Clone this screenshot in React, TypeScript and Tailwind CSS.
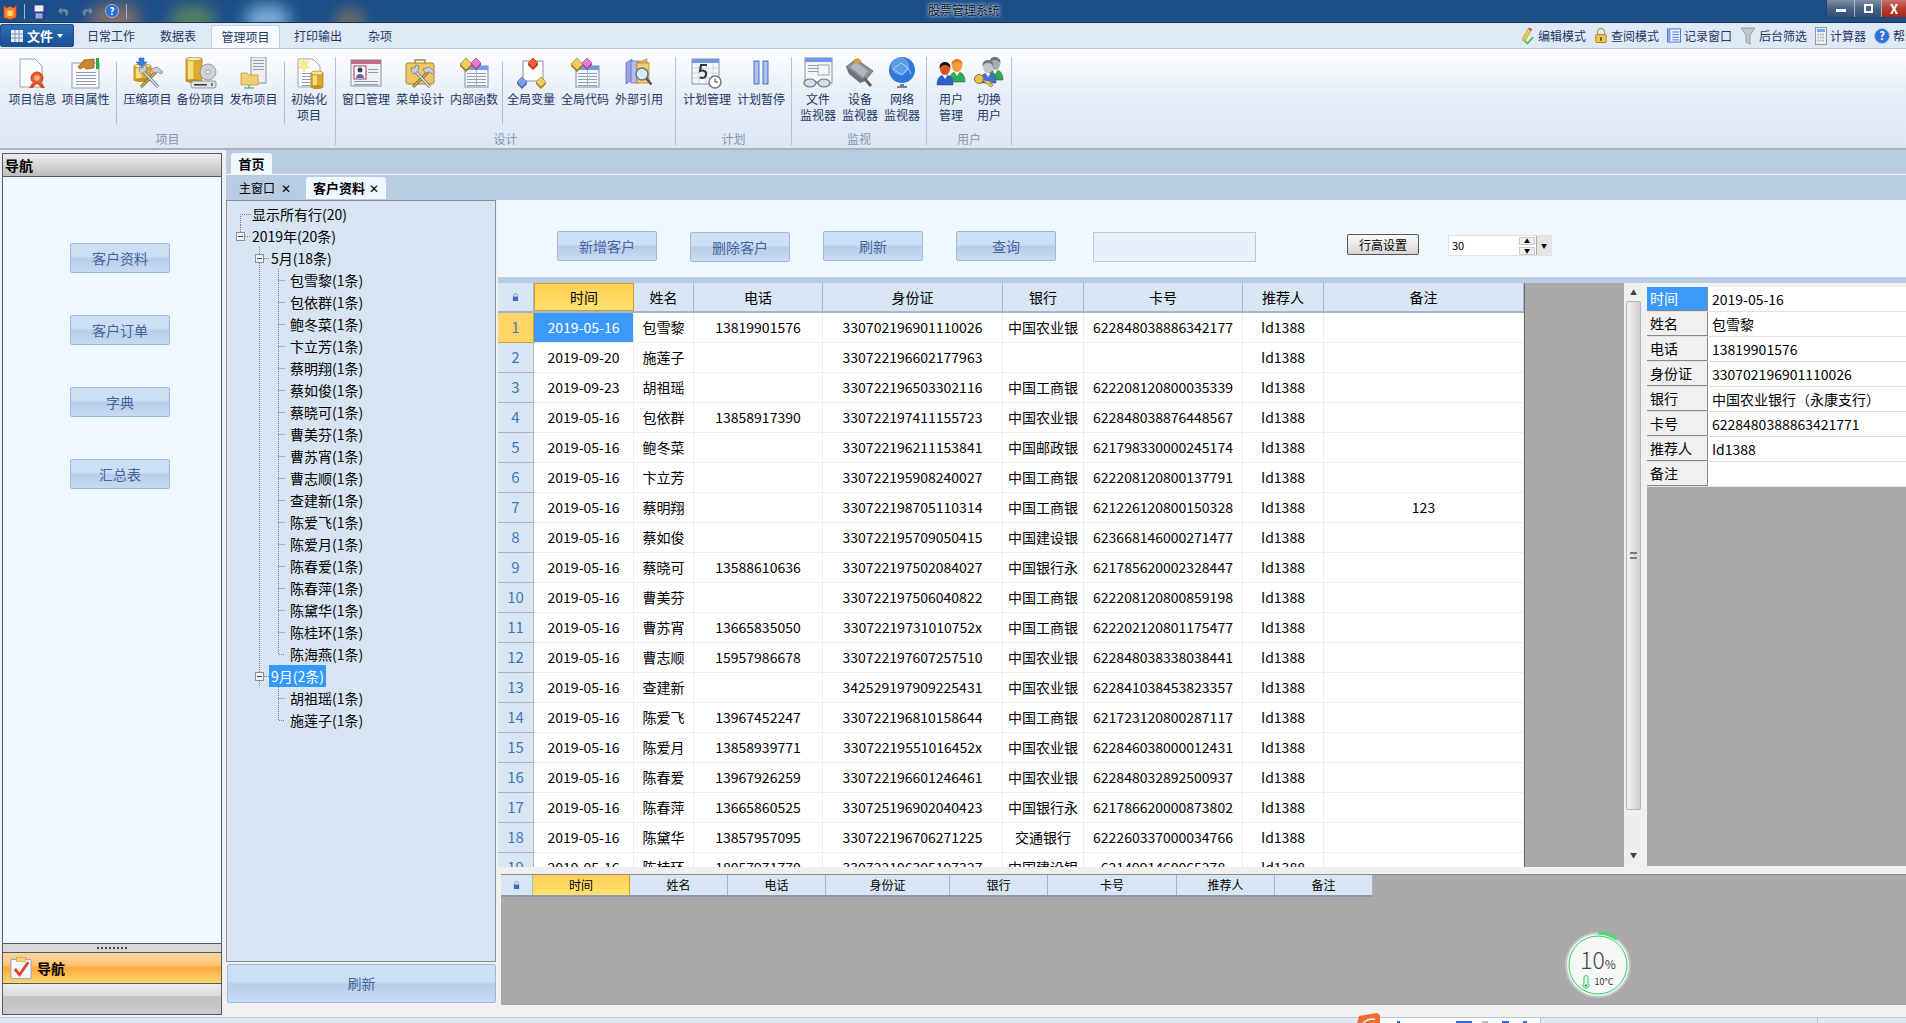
import React from 'react';

const FONT = "font-['Noto_Sans_CJK_SC','Noto_Sans',sans-serif]";
const BLUE_BTN =
  'flex items-center justify-center border border-[#9fb8da] rounded-[2px] text-[14px] text-[#44659f] bg-[linear-gradient(#cee0f6_0%,#cbdef5_45%,#b9cde8_52%,#c8dbf3_100%)]';
const HEAD = 'flex items-center justify-center border-r border-[#a5b5d0] text-[14px] text-black bg-[#d8e6f4]';
const HEAD_ACTIVE =
  'flex items-center justify-center border border-[#d99a2b] text-[14px] text-black bg-[linear-gradient(#ffd052,#ffe270)]';

// ---- ribbon icons, all on a 32x32 box
const Doc = ({ x = 5, w = 20 }: { x?: number; w?: number }) => (
  <path d={`M${x} 2h${w - 7}l7 7v21h-${w}z`} fill="#fbfcfe" stroke="#9aa6b8" strokeWidth="1" />
);
const Lines = ({ x, y, w, n }: { x: number; y: number; w: number; n: number }) => (
  <g stroke="#8e9bb0" strokeWidth="1">
    {Array.from({ length: n }).map((_, i) => (
      <line key={i} x1={x} x2={x + w} y1={y + i * 3 + 0.5} y2={y + i * 3 + 0.5} />
    ))}
  </g>
);
const Cyl = ({ x, y, w, h }: { x: number; y: number; w: number; h: number }) => (
  <g>
    <rect x={x} y={y + 2} width={w} height={h - 3} fill="#dfa92e" stroke="#a97c14" strokeWidth=".7" />
    <rect x={x + 2} y={y + 3} width={w / 3} height={h - 5} fill="#f7dd83" />
    <ellipse cx={x + w / 2} cy={y + 2} rx={w / 2} ry="2" fill="#f6e6a4" stroke="#a97c14" strokeWidth=".7" />
    <ellipse cx={x + w / 2} cy={y + h - 1} rx={w / 2} ry="2" fill="#c48f1c" />
  </g>
);
const Tools = ({ dx = 0, dy = 0 }: { dx?: number; dy?: number }) => (
  <g transform={`translate(${dx} ${dy})`}>
    <path d="M8 28l15-15" stroke="#6a5a2c" strokeWidth="3" />
    <path d="M8 28l15-15" stroke="#d9b65a" strokeWidth="1.4" />
    <path d="M25 28L11 13" stroke="#70777f" strokeWidth="3.2" />
    <path d="M25 28L11 13" stroke="#dfe4ea" strokeWidth="1.4" />
    <path d="M7 8a5 5 0 0 0 2 7l4-3 1-5-3-1-1 3-2 0z" fill="#c8ced6" stroke="#6f7780" strokeWidth=".7" />
    <path d="M18 10l6-2 6 5-2 2-4-2-4 1z" fill="#c8ced6" stroke="#6f7780" strokeWidth=".7" />
  </g>
);
const TableIc = ({ x = 7, y = 9 }: { x?: number; y?: number }) => (
  <g>
    <rect x={x} y={y} width="23" height="21" fill="#f5f7fb" stroke="#7f8ea6" />
    <rect x={x} y={y} width="23" height="4" fill="#6f9be6" />
    <Lines x={x + 2} y={y + 7} w={19} n={5} />
    <path d={`M${x + 11.5} ${y + 4}v17`} stroke="#a8b3c4" />
  </g>
);
const Diamond = ({ cx, cy, c, d, r = 5 }: { cx: number; cy: number; c: string; d: string; r?: number }) => (
  <g>
    <path d={`M${cx} ${cy - r}L${cx + r} ${cy}L${cx} ${cy + r}L${cx - r} ${cy}z`} fill={c} stroke={d} strokeWidth=".7" />
    <path d={`M${cx - r} ${cy}L${cx} ${cy + r}L${cx + r} ${cy}L${cx + r} ${cy + 2}L${cx} ${cy + r + 2}L${cx - r} ${cy + 2}z`} fill={d} />
  </g>
);
const Person = ({ x, y, skin, hair, body, s = 1 }: { x: number; y: number; skin: string; hair: string; body: string; s?: number }) => (
  <g transform={`translate(${x} ${y}) scale(${s})`}>
    <path d="M-8 22c0-7 3-10 8-10s8 3 8 10z" fill={body} stroke="#2a3f5f" strokeWidth=".5" />
    <path d="M-2.5 12L0 16l2.5-4z" fill="#fff" />
    <ellipse cx="0" cy="6" rx="5" ry="6" fill={skin} />
    <path d="M-5.4 6c-.6-5 2-7 5.4-7s6 2 5.4 7c-1-3-3-4-5.400-4s-4.400 1-5.400 4z" fill={hair} />
  </g>
);

const ICONS: Record<string, React.ReactNode> = {
  info: (
    <>
      <Doc x={3} w={22} />
      <circle cx="20" cy="21" r="6" fill="#ee5a2a" stroke="#c43c14" />
      <circle cx="20" cy="21" r="2.800" fill="#fbb27c" />
      <path d="M15 26l-3 5h4l3-4zM25 26l3 5h-4l-3-4z" fill="#dd4a1e" />
    </>
  ),
  prop: (
    <>
      <rect x="2" y="6" width="27" height="25" fill="#f8fafd" stroke="#8f9bb0" />
      <Lines x={6} y={15} w={20} n={5} />
      <path d="M8 10l6-7 10-1 0 9-8 1-2-2-4 2z" fill="#c98a2d" stroke="#7c5311" strokeWidth=".7" />
      <rect x="26" y="1" width="3" height="11" fill="#28a745" />
    </>
  ),
  zip: (
    <>
      <Cyl x={2} y={7} w={17} h={17} />
      <path d="M7 1h5v4h3l-5.500 5L4 5h3z" fill="#3b7fe0" stroke="#1f55a8" strokeWidth=".5" />
      <Tools dx={1} dy={2} />
    </>
  ),
  backup: (
    <>
      <Cyl x={1} y={0} w={16} h={25} />
      <rect x="6" y="24" width="25" height="7" rx="2" fill="#dfe3e8" stroke="#6c7480" strokeWidth=".7" />
      <rect x="9" y="27" width="13" height="1.500" fill="#333" />
      <rect x="26" y="26" width="2" height="3" fill="#2aa84a" />
      <circle cx="23" cy="15" r="8" fill="#cfd3d8" stroke="#7c838c" strokeWidth=".7" />
      <circle cx="23" cy="15" r="2" fill="#fff" stroke="#7c838c" strokeWidth=".7" />
    </>
  ),
  publish: (
    <>
      <rect x="13" y="0" width="15" height="26" fill="#eceeef" stroke="#8c9096" />
      <Lines x={15} y={3} w={11} n={4} />
      <path d="M3 16h6l2 2h9v10H3z" fill="#f2cf73" stroke="#b68f2d" strokeWidth=".7" />
      <path d="M11 28v3M6 31h10" stroke="#2fae3e" />
    </>
  ),
  init: (
    <>
      <Doc x={5} w={22} />
      <Lines x={9} y={16} w={11} n={5} />
      <path d="M10 1l1.500 4 4-1-2 4 3 3-4 0-1.500 4-1.500-4-4 0 3-3-2-4 4 1z" fill="#fdf08a" stroke="#e7c733" strokeWidth=".4" />
      <Cyl x={18} y={14} w={12} h={17} />
    </>
  ),
  window: (
    <>
      <rect x="1" y="3" width="30" height="26" fill="#eef0f4" stroke="#8a8f9a" />
      <rect x="1" y="3" width="30" height="4" fill="#c06a86" />
      <rect x="4" y="9" width="12" height="13" fill="#fff" stroke="#a8365f" />
      <circle cx="10" cy="13" r="2.500" fill="#33415f" />
      <path d="M6 21c0-3 2-4 4-4s4 1 4 4z" fill="#4d6da8" />
      <Lines x={18} y={12} w={10} n={2} />
      <Lines x={4} y={24} w={24} n={2} />
    </>
  ),
  menu: (
    <>
      <rect x="2" y="6" width="28" height="21" rx="2" fill="#f0c363" stroke="#a98534" />
      <path d="M11 6V3h10v3" fill="none" stroke="#a98534" strokeWidth="1.500" />
      <Tools dx={1} dy={2} />
    </>
  ),
  func: (
    <>
      <TableIc />
      <Diamond cx={8} cy={7} c="#f0cb63" d="#a07e26" r={6} />
      <Diamond cx={18} cy={6} c="#e57fd0" d="#a74a96" r={5} />
    </>
  ),
  var: (
    <>
      <rect x="8" y="4" width="20" height="20" fill="#fbfbfb" stroke="#8a8f98" />
      <Diamond cx={18} cy={6} c="#f0603a" d="#b83a1c" r={5} />
      <Diamond cx={7} cy={25} c="#7f9de6" d="#4a66b8" r={5} />
      <Diamond cx={26} cy={25} c="#f2cb5f" d="#a9842a" r={5} />
    </>
  ),
  ref: (
    <>
      <path d="M3 6l6-4v21l-6 4z" fill="#9aa3e6" stroke="#5a63a8" strokeWidth=".7" />
      <rect x="8" y="4" width="8" height="22" fill="#b4bbf0" stroke="#5a63a8" strokeWidth=".7" />
      <path d="M14 6l10-4v20l-10 4z" fill="#e9bf4a" stroke="#a07e26" strokeWidth=".7" />
      <rect x="14" y="6" width="12" height="20" fill="#f3d26f" stroke="#a07e26" strokeWidth=".7" />
      <circle cx="19" cy="17" r="6" fill="#dceaf6" stroke="#6b7280" strokeWidth="1.500" />
      <path d="M23.500 21.500l5 6" stroke="#52565c" strokeWidth="2.500" />
    </>
  ),
  plan: (
    <>
      <rect x="1" y="2" width="27" height="25" fill="#f4f6fa" stroke="#8a93a3" />
      <rect x="1" y="2" width="27" height="4" fill="#6f9be6" />
      <path d="M1 11h27M1 16h27M1 21h27M8 6v21M15 6v21M22 6v21" stroke="#c2c9d4" strokeWidth=".7" />
      <path d="M16 8h-6l-1 6c3-1 7 0 6 4s-5 3-6 2" fill="none" stroke="#333" strokeWidth="2" />
      <circle cx="24" cy="25" r="6" fill="#fff" stroke="#6f7680" strokeWidth="1.400" />
      <path d="M24 21.500V25h3" fill="none" stroke="#333" />
    </>
  ),
  pause: (
    <g stroke="#2f55b8" strokeWidth=".8">
      <rect x="9" y="4" width="5" height="23" fill="#a9c2f2" />
      <rect x="18" y="4" width="5" height="23" fill="#a9c2f2" />
    </g>
  ),
  filemon: (
    <>
      <rect x="3" y="1" width="27" height="25" fill="#f3f5f9" stroke="#8a93a3" />
      <rect x="3" y="1" width="27" height="4" fill="#6f9be6" />
      <Lines x={6} y={8} w={10} n={3} />
      <rect x="16" y="8" width="11" height="10" fill="none" stroke="#9aa3b2" />
      <ellipse cx="8" cy="26" rx="6" ry="4" fill="#d5dfe9" stroke="#6f7680" strokeWidth="1.200" />
      <ellipse cx="22" cy="26" rx="6" ry="4" fill="#d5dfe9" stroke="#6f7680" strokeWidth="1.200" />
      <path d="M14 25h2" stroke="#6f7680" />
    </>
  ),
  device: (
    <>
      <path d="M2 10L12 2l17 12-8 10z" fill="#8d9198" stroke="#4e5258" strokeWidth=".7" />
      <path d="M6 10l6-5 12 9-5 6z" fill="#b3b6bb" />
      <path d="M9 3l5-2 4 3-5 3z" fill="#e39a3c" />
      <path d="M20 21l7 8" stroke="#5d6167" strokeWidth="3" />
      <path d="M2 10l3 7 11 9 5-2" fill="#6e7278" />
    </>
  ),
  globe: (
    <>
      <circle cx="16" cy="13" r="13" fill="#2f78d8" />
      <circle cx="14" cy="9" r="9" fill="#7db4f0" opacity=".6" />
      <path d="M7 12l8-6 7 5-6 7zM22 11l3 6" fill="none" stroke="#d5e8ff" strokeWidth=".7" />
      <path d="M14 27h4v2h3v2H11v-2h3z" fill="#7b8089" />
    </>
  ),
  users: (
    <>
      <Person x={22} y={3} skin="#f39b3a" hair="#e17f1d" body="#2fae55" />
      <Person x={10} y={6} skin="#d9541d" hair="#141414" body="#2f62d0" />
    </>
  ),
  switch: (
    <>
      <Person x={22} y={1} skin="#a8adb2" hair="#6d7278" body="#3aa457" />
      <Person x={15} y={4} skin="#c3c7cc" hair="#72777d" body="#4b6ed2" />
      <circle cx="6" cy="22" r="4.500" fill="#e9c44f" stroke="#8c7420" />
      <path d="M9 23l9 7 2-2-3-2 2-1" fill="#e9c44f" stroke="#8c7420" strokeWidth=".7" />
    </>
  ),
};

const RibbonIcon = ({ name, className = 'w-[32px] h-[32px]' }: { name: string; className?: string }) => (
  <svg viewBox="0 0 32 32" className={className}>
    {ICONS[name]}
  </svg>
);

const RibbonItem = ({ icon, lines, w }: { icon: string; lines: string[]; w: string }) => (
  <div className={`flex flex-col items-center shrink-0 ${w}`}>
    <RibbonIcon name={icon} />
    <div className="mt-[2px] text-center text-[12px] leading-[16px] text-[#1f3864] whitespace-nowrap">
      {lines.map((l) => (
        <div key={l}>{l}</div>
      ))}
    </div>
  </div>
);

const InnerSep = ({ className }: { className: string }) => (
  <div className={`w-px h-[62px] mt-[5px] shrink-0 bg-[#aebccd] ${className}`} />
);
const GroupSep = () => <div className="w-px h-[88px] mt-[8px] shrink-0 bg-[#b4c2d3]" />;

const Group = ({ label, w, pl, children }: { label: string; w: string; pl: string; children: React.ReactNode }) => (
  <div className={`flex flex-col shrink-0 ${w}`}>
    <div className={`flex h-[83px] pt-[8px] ${pl}`}>{children}</div>
    <div className="text-center text-[12px] leading-[14px] text-[#8595aa]">{label}</div>
  </div>
);

const QuickIcon = ({ name }: { name: string }) => {
  if (name === 'edit')
    return (
      <svg viewBox="0 0 16 18" className="w-[15px] h-[18px]">
        <path d="M9 1l3 2-6 10-3 1 0-3z" fill="#f2c94c" stroke="#a8842a" strokeWidth=".6" />
        <path d="M10 0l3 2-1 1.500-3-2z" fill="#d33" />
        <path d="M5 14l3 3 6-7" fill="none" stroke="#5cb83c" strokeWidth="1.800" />
      </svg>
    );
  if (name === 'lock')
    return (
      <svg viewBox="0 0 16 18" className="w-[14px] h-[17px]">
        <path d="M4 8V5a4 4 0 0 1 8 0v3" fill="none" stroke="#b9a27a" strokeWidth="1.500" />
        <rect x="2" y="8" width="12" height="9" rx="1" fill="#f3c44e" stroke="#a27a1f" />
        <rect x="7" y="11" width="2" height="4" fill="#5c4511" />
      </svg>
    );
  if (name === 'rec')
    return (
      <svg viewBox="0 0 16 16" className="w-[14px] h-[15px]">
        <rect x=".5" y=".5" width="15" height="15" fill="#eef3fc" stroke="#3f6cc7" />
        <rect x="1" y="1" width="3" height="14" fill="#7ea4ea" />
        <path d="M6 4h8M6 7h8M6 10h8M6 13h8" stroke="#3f6cc7" />
      </svg>
    );
  if (name === 'filter')
    return (
      <svg viewBox="0 0 16 18" className="w-[16px] h-[18px]">
        <path d="M1 1h14l-5 7v9l-4-2V8z" fill="#c4c6c9" stroke="#7e8186" strokeWidth=".7" />
      </svg>
    );
  if (name === 'calc')
    return (
      <svg viewBox="0 0 12 18" className="w-[12px] h-[18px]">
        <rect x=".5" y=".5" width="11" height="17" fill="#eceef1" stroke="#9399a3" />
        <rect x="2" y="2" width="8" height="3" fill="#7ea4ea" />
        <path d="M2.500 7.500h7M2.500 10.500h7M2.500 13.500h7" stroke="#a8adb6" strokeDasharray="1.500 1" strokeWidth="1.500" />
      </svg>
    );
  return <Help className="w-[16px] h-[16px]" />;
};

const Help = ({ className }: { className: string }) => (
  <svg viewBox="0 0 16 16" className={className}>
    <circle cx="8" cy="8" r="7.500" fill="#2f6fd8" stroke="#a9c4ee" />
    <text x="8" y="12" textAnchor="middle" fontSize="11" fontWeight="700" fill="#fff">
      ?
    </text>
  </svg>
);

const QUICK = [
  ['edit', '编辑模式'],
  ['lock', '查阅模式'],
  ['rec', '记录窗口'],
  ['filter', '后台筛选'],
  ['calc', '计算器'],
  ['help', '帮助'],
];

const Lock = () => (
  <svg viewBox="0 0 8 10" className="w-[7px] h-[9px]">
    <path d="M2 4V2.500a2 2 0 0 1 4 0V4" fill="none" stroke="#7d93bd" />
    <rect x="1" y="4" width="6" height="5" fill="#3f66c4" />
  </svg>
);

const NavBtn = ({ children }: { children: string }) => <div className={`w-[100px] h-[30px] ${BLUE_BTN}`}>{children}</div>;

// tree connector drawn in a 19x22 cell
const Conn = ({ kind }: { kind: string }) => {
  const d = 'stroke-[#808080]';
  return (
    <svg width="19" height="22" className="shrink-0">
      <g className={d} strokeDasharray="1 1" fill="none">
        {kind === 'first' && <path d="M7.500 22V11.500H18" />}
        {kind === 'v' && <path d="M7.500 0V22" />}
        {kind === 'tee' && <path d="M7.500 0V22M7.500 11.500H14" />}
        {kind === 'end' && <path d="M7.500 0V11.500H14" />}
        {kind === 'box' && <path d="M7.500 0V7M12 11.500H18" />}
        {kind === 'boxd' && <path d="M7.500 0V7M12 11.500H18M7.500 16V22" />}
      </g>
      {(kind === 'box' || kind === 'boxd') && (
        <g>
          <rect x="3.500" y="7.500" width="8" height="8" fill="#eef2f7" stroke="#8a8f98" />
          <path d="M5 11.500h5" stroke="#444" />
        </g>
      )}
    </svg>
  );
};

const MAY = ['包雪黎', '包依群', '鲍冬菜', '卞立芳', '蔡明翔', '蔡如俊', '蔡晓可', '曹美芬', '曹苏宵', '曹志顺', '查建新', '陈爱飞', '陈爱月', '陈春爱', '陈春萍', '陈黛华', '陈桂环', '陈海燕'];
const SEP = ['胡祖瑶', '施莲子'];

const TreeRow = ({ cols, text, active }: { cols: string[]; text: string; active?: boolean }) => (
  <div className="flex items-center h-[22px] text-[14px] text-black whitespace-nowrap">
    {cols.map((k, i) => (
      <Conn key={i} kind={k} />
    ))}
    <span className={active ? 'px-[2px] -ml-[2px] leading-[22px] bg-[#3399ff] text-white' : ''}>{text}</span>
  </div>
);

const COLS = 'grid-cols-[36px_100px_60px_129px_180px_81px_159px_81px_200px]';
const ROWS: string[][] = [
  ['2019-05-16', '包雪黎', '13819901576', '330702196901110026', '中国农业银', '622848038886342177', ''],
  ['2019-09-20', '施莲子', '', '330722196602177963', '', '', ''],
  ['2019-09-23', '胡祖瑶', '', '330722196503302116', '中国工商银', '622208120800035339', ''],
  ['2019-05-16', '包依群', '13858917390', '330722197411155723', '中国农业银', '622848038876448567', ''],
  ['2019-05-16', '鲍冬菜', '', '330722196211153841', '中国邮政银', '621798330000245174', ''],
  ['2019-05-16', '卞立芳', '', '330722195908240027', '中国工商银', '622208120800137791', ''],
  ['2019-05-16', '蔡明翔', '', '330722198705110314', '中国工商银', '621226120800150328', '123'],
  ['2019-05-16', '蔡如俊', '', '330722195709050415', '中国建设银', '623668146000271477', ''],
  ['2019-05-16', '蔡晓可', '13588610636', '330722197502084027', '中国银行永', '621785620002328447', ''],
  ['2019-05-16', '曹美芬', '', '330722197506040822', '中国工商银', '622208120800859198', ''],
  ['2019-05-16', '曹苏宵', '13665835050', '33072219731010752x', '中国工商银', '622202120801175477', ''],
  ['2019-05-16', '曹志顺', '15957986678', '330722197607257510', '中国农业银', '622848038338038441', ''],
  ['2019-05-16', '查建新', '', '342529197909225431', '中国农业银', '622841038453823357', ''],
  ['2019-05-16', '陈爱飞', '13967452247', '330722196810158644', '中国工商银', '621723120800287117', ''],
  ['2019-05-16', '陈爱月', '13858939771', '33072219551016452x', '中国农业银', '622846038000012431', ''],
  ['2019-05-16', '陈春爱', '13967926259', '330722196601246461', '中国农业银', '622848032892500937', ''],
  ['2019-05-16', '陈春萍', '13665860525', '330725196902040423', '中国银行永', '621786620000873802', ''],
  ['2019-05-16', '陈黛华', '13857957095', '330722196706271225', '交通银行', '622260337000034766', ''],
  ['2019-05-16', '陈桂环', '18057971770', '330722196305197327', '中国建设银', '6214991460065278', ''],
];

const Cell = ({ children, className = '' }: { children?: React.ReactNode; className?: string }) => (
  <div className={`flex items-center justify-center h-[30px] border-r border-b border-[#ededed] text-[14px] text-black whitespace-nowrap overflow-hidden ${className}`}>
    {children}
  </div>
);

const PROPS: [string, string][] = [
  ['时间', '2019-05-16'],
  ['姓名', '包雪黎'],
  ['电话', '13819901576'],
  ['身份证', '330702196901110026'],
  ['银行', '中国农业银行（永康支行）'],
  ['卡号', '6228480388863421771'],
  ['推荐人', 'Id1388'],
  ['备注', ''],
];

const LOWER = ['姓名', '电话', '身份证', '银行', '卡号', '推荐人', '备注'];

export default function App() {
  return (
    <div className={`relative w-[1906px] h-[1023px] overflow-hidden flex flex-col bg-[#f0f0f0] ${FONT}`}>
      {/* title bar */}
      <div className="relative h-[23px] shrink-0 flex items-center overflow-hidden border-b border-[#16304f] bg-[#1c4e88]">
        <div className="absolute left-[90px] top-[4px] w-[50px] h-[30px] rounded-full bg-[#b07a5a] opacity-70 blur-[8px]" />
        <div className="absolute left-[170px] top-[6px] w-[45px] h-[30px] rounded-full bg-[#6f9a52] opacity-70 blur-[8px]" />
        <div className="absolute left-[245px] top-[5px] w-[45px] h-[30px] rounded-full bg-[#8fc4e6] opacity-80 blur-[8px]" />
        <div className="absolute left-[335px] top-[8px] w-[30px] h-[25px] rounded-full bg-[#8a7a5c] opacity-70 blur-[7px]" />
        <div className="relative flex items-center gap-[7px] pl-[3px]">
          <svg viewBox="0 0 16 18" className="w-[14px] h-[17px]">
            <path d="M1 2l3 3 4-2 4 2 3-3v14l-7 2-7-2z" fill="#f0862d" stroke="#c8351a" />
            <path d="M5 8h6v6H5z" fill="#f7dc6f" />
          </svg>
          <div className="w-px h-[15px] bg-[#9fb4cc]" />
          <svg viewBox="0 0 16 16" className="w-[14px] h-[15px]">
            <rect width="16" height="16" rx="1" fill="#2d3f8f" />
            <rect x="3" y="1" width="10" height="7" fill="#e8ecf6" />
            <rect x="4" y="10" width="8" height="6" fill="#9aa6cf" />
          </svg>
          <svg viewBox="0 0 14 14" className="w-[13px] h-[14px] ml-[4px]">
            <path d="M11 12c3-5-1-9-6-6V3L1 7l4 4V8c3-1 5 0 4 4z" fill="#6e86a3" />
          </svg>
          <svg viewBox="0 0 14 14" className="w-[13px] h-[14px] ml-[4px] -scale-x-100">
            <path d="M11 12c3-5-1-9-6-6V3L1 7l4 4V8c3-1 5 0 4 4z" fill="#6e86a3" />
          </svg>
          <Help className="w-[14px] h-[14px] ml-[4px]" />
          <div className="w-px h-[15px] bg-[#9fb4cc]" />
        </div>
        <div className="absolute left-[22px] right-0 top-px text-center text-[12px] leading-[18px] text-[#0d1722] [text-shadow:0_0_5px_#dbe9f7,0_0_2px_#dbe9f7]">
          股票管理系统
        </div>
        <div className="absolute right-0 top-0 flex h-[18px] border-l border-b border-[#2a3f5c] rounded-bl-[3px]">
          <div className="flex items-center justify-center w-[28px] border-r border-[#a9b6c6] bg-[linear-gradient(#7e8fa3,#46607f_55%,#33507a)]">
            <div className="w-[10px] h-[3px] mt-[4px] bg-white" />
          </div>
          <div className="flex items-center justify-center w-[27px] border-r border-[#a9b6c6] bg-[linear-gradient(#7e8fa3,#46607f_55%,#33507a)]">
            <div className="w-[9px] h-[9px] border-[2px] border-white" />
          </div>
          <div className="flex items-center justify-center w-[24px] text-[13px] font-bold text-white bg-[linear-gradient(#c9716a,#b23a2c_55%,#a8281b)]">
            X
          </div>
        </div>
      </div>

      {/* ribbon tabs */}
      <div className="flex h-[25px] shrink-0 overflow-hidden bg-[#dfe9f5] text-[12px] text-[#1f3864] whitespace-nowrap">
        <div className="flex items-center justify-center gap-[4px] w-[74px] h-[23px] mt-px shrink-0 rounded-[2px] border border-[#1f4f8f] text-[13px] font-bold text-white bg-[linear-gradient(#2f6eb4,#184f92)]">
          <svg viewBox="0 0 12 12" className="w-[12px] h-[12px]">
            <rect width="12" height="12" fill="#e9eff8" />
            <path d="M0 4h12M0 8h12M4 0v12M8 0v12" stroke="#7e96b8" />
          </svg>
          文件
          <span className="w-0 h-0 border-x-[3px] border-x-transparent border-t-[4px] border-t-white" />
        </div>
        <div className="flex items-center justify-center w-[74px] shrink-0">日常工作</div>
        <div className="flex items-center justify-center w-[60px] shrink-0">数据表</div>
        <div className="flex items-center justify-center w-[69px] ml-[3px] mt-[2px] shrink-0 rounded-t-[3px] border border-b-0 border-[#c4d2e2] bg-[#f6faff]">管理项目</div>
        <div className="flex items-center justify-center w-[76px] shrink-0">打印输出</div>
        <div className="flex items-center justify-center w-[48px] shrink-0">杂项</div>
        <div className="flex items-center gap-[8px] ml-[1116px] shrink-0">
          {QUICK.map(([ic, t]) => (
            <div key={t} className="flex items-center gap-[3px] shrink-0">
              <QuickIcon name={ic} />
              <span>{t}</span>
            </div>
          ))}
        </div>
      </div>

      {/* ribbon body */}
      <div className="flex h-[102px] shrink-0 border-t border-b-2 border-t-[#b9c9dd] border-b-[#a9b5c5] bg-[linear-gradient(#ffffff,#e4ecf7_50%,#dde7f4)]">
        <Group label="项目" w="w-[335px]" pl="pl-[6px]">
          <RibbonItem icon="info" lines={['项目信息']} w="w-[53px]" />
          <RibbonItem icon="prop" lines={['项目属性']} w="w-[53px]" />
          <InnerSep className="mx-[4px]" />
          <RibbonItem icon="zip" lines={['压缩项目']} w="w-[53px]" />
          <RibbonItem icon="backup" lines={['备份项目']} w="w-[53px]" />
          <RibbonItem icon="publish" lines={['发布项目']} w="w-[53px]" />
          <InnerSep className="mx-[4px]" />
          <RibbonItem icon="init" lines={['初始化', '项目']} w="w-[40px]" />
        </Group>
        <GroupSep />
        <Group label="设计" w="w-[339px]" pl="pl-[3px]">
          <RibbonItem icon="window" lines={['窗口管理']} w="w-[54px]" />
          <RibbonItem icon="menu" lines={['菜单设计']} w="w-[54px]" />
          <RibbonItem icon="func" lines={['内部函数']} w="w-[54px]" />
          <InnerSep className="mx-[1px]" />
          <RibbonItem icon="var" lines={['全局变量']} w="w-[54px]" />
          <RibbonItem icon="func" lines={['全局代码']} w="w-[54px]" />
          <RibbonItem icon="ref" lines={['外部引用']} w="w-[54px]" />
        </Group>
        <GroupSep />
        <Group label="计划" w="w-[115px]" pl="pl-[4px]">
          <RibbonItem icon="plan" lines={['计划管理']} w="w-[54px]" />
          <RibbonItem icon="pause" lines={['计划暂停']} w="w-[54px]" />
        </Group>
        <GroupSep />
        <Group label="监视" w="w-[134px]" pl="pl-[5px]">
          <RibbonItem icon="filemon" lines={['文件', '监视器']} w="w-[42px]" />
          <RibbonItem icon="device" lines={['设备', '监视器']} w="w-[42px]" />
          <RibbonItem icon="globe" lines={['网络', '监视器']} w="w-[42px]" />
        </Group>
        <GroupSep />
        <Group label="用户" w="w-[84px]" pl="pl-[5px]">
          <RibbonItem icon="users" lines={['用户', '管理']} w="w-[38px]" />
          <RibbonItem icon="switch" lines={['切换', '用户']} w="w-[38px]" />
        </Group>
        <GroupSep />
      </div>

      {/* workspace */}
      <div className="flex h-[867px] shrink-0">
        {/* navigation */}
        <div className="flex w-[226px] shrink-0 pt-[3px] pb-[2px] pl-[2px] pr-[4px]">
          <div className="flex flex-col flex-1 border border-[#4f5b6b] bg-[#eff7ff]">
            <div className="flex items-center h-[23px] shrink-0 pl-[2px] border-b border-[#4f5b6b] text-[14px] font-bold text-black bg-[linear-gradient(#eeeeee,#bdbdbd)]">
              导航
            </div>
            <div className="flex flex-col items-center flex-1 gap-[42px] pt-[66px] pl-[16px]">
              <NavBtn>客户资料</NavBtn>
              <NavBtn>客户订单</NavBtn>
              <NavBtn>字典</NavBtn>
              <NavBtn>汇总表</NavBtn>
            </div>
            <div className="flex items-center justify-center h-[9px] shrink-0 border-t border-[#4f5b6b] bg-[#d9d9d9]">
              <div className="w-[30px] h-[2px] border-t-2 border-dotted border-[#444]" />
            </div>
            <div className="flex items-center gap-[4px] h-[32px] shrink-0 pl-[7px] border-y border-[#4f5b6b] text-[14px] font-bold text-black bg-[linear-gradient(#ffd79c,#ffc273_40%,#ffa83e_50%,#ffd76a)]">
              <svg viewBox="0 0 24 24" className="w-[23px] h-[24px]">
                <rect x="1" y="3" width="21" height="20" rx="1" fill="#f4f7fb" stroke="#86a3c6" />
                <rect x="7" y="1" width="9" height="4" fill="#f3d66b" stroke="#b7992f" strokeWidth=".6" />
                <path d="M5 13l5 6 9-13" fill="none" stroke="#e2442c" strokeWidth="3" />
              </svg>
              导航
            </div>
            <div className="h-[30px] shrink-0 bg-[linear-gradient(#ececec,#dcdcdc_40%,#c3c3c3_42%,#cbcbcb)]" />
          </div>
        </div>

        {/* documents */}
        <div className="flex flex-col flex-1 min-w-0">
          <div className="flex h-[25px] shrink-0 pt-[3px] pl-[5px] border-b border-[#f2f6fb] bg-[#b9cce4]">
            <div className="flex items-center justify-center w-[41px] rounded-t-[3px] text-[13px] font-bold text-black bg-[#eff7ff]">首页</div>
          </div>
          <div className="flex h-[25px] shrink-0 pt-[2px] pl-[13px] bg-[#b9cce4] border-b border-[#b9cce4]">
            <div className="flex items-center gap-[6px] w-[67px] text-[12px] text-black">
              主窗口 <span className="text-[12px]">✕</span>
            </div>
            <div className="flex items-center justify-center gap-[4px] w-[80px] rounded-t-[3px] text-[13px] font-bold text-black bg-[#eff7ff]">
              客户资料 <span className="font-normal text-[12px]">✕</span>
            </div>
          </div>

          <div className="flex flex-1 min-h-0">
            {/* tree */}
            <div className="flex flex-col w-[272px] shrink-0 pr-[2px]">
              <div className="h-[762px] shrink-0 pt-[2px] pl-[6px] border border-[#8a8f98] bg-[#d7e4f2]">
                <TreeRow cols={['first']} text="显示所有行(20)" />
                <TreeRow cols={['box']} text="2019年(20条)" />
                <TreeRow cols={['', 'boxd']} text="5月(18条)" />
                {MAY.map((n, i) => (
                  <TreeRow key={n} cols={['', 'v', i === MAY.length - 1 ? 'end' : 'tee']} text={`${n}(1条)`} />
                ))}
                <TreeRow cols={['', 'boxd']} text="9月(2条)" active />
                {SEP.map((n, i) => (
                  <TreeRow key={n} cols={['', '', i === 1 ? 'end' : 'tee']} text={`${n}(1条)`} />
                ))}
              </div>
              <div className={`h-[39px] mt-[2px] ml-px shrink-0 ${BLUE_BTN}`}>刷新</div>
            </div>

            {/* data */}
            <div className="flex flex-col flex-1 min-w-0">
              <div className="flex items-start h-[77px] shrink-0 pt-[31px] pl-[59px] bg-[#eff7ff]">
                <div className={`w-[100px] h-[30px] ${BLUE_BTN}`}>新增客户</div>
                <div className={`w-[100px] h-[30px] mt-px ml-[33px] ${BLUE_BTN}`}>删除客户</div>
                <div className={`w-[100px] h-[30px] ml-[33px] ${BLUE_BTN}`}>刷新</div>
                <div className={`w-[100px] h-[30px] ml-[33px] ${BLUE_BTN}`}>查询</div>
                <div className="w-[163px] h-[30px] mt-px ml-[37px] border border-[#b4cce4] bg-[#e8f1fb]" />
                <div className="flex items-center justify-center w-[72px] h-[21px] mt-[3px] ml-[91px] rounded-[2px] border border-[#555] text-[12px] text-black bg-[linear-gradient(#fafafa,#d6d6d6)]">
                  行高设置
                </div>
                <div className="flex items-center w-[104px] h-[21px] mt-[4px] ml-[29px] pl-[3px] border border-[#dbe3ec] bg-white text-[11px] text-black">
                  <span className="flex-1">30</span>
                  <span className="flex flex-col w-[16px] gap-[2px]">
                    <span className="flex items-center justify-center h-[8px] border border-[#c8ccd2] bg-[#f0f0f0] text-[6px] leading-none">▲</span>
                    <span className="flex items-center justify-center h-[8px] border border-[#c8ccd2] bg-[#f0f0f0] text-[6px] leading-none">▼</span>
                  </span>
                  <span className="flex items-center justify-center w-[15px] h-[19px] ml-px border-l border-[#aaa] bg-[#e4e4e4] text-[6px]">▼</span>
                </div>
              </div>
              <div className="h-[6px] shrink-0 bg-[#b9cce4]" />

              <div className="flex h-[584px] shrink-0 overflow-hidden">
                <div className="w-[1026px] shrink-0 overflow-hidden bg-white">
                  <div className={`grid ${COLS} h-[30px] border-b-2 border-[#a5b5d0]`}>
                    <div className={HEAD}>
                      <Lock />
                    </div>
                    <div className={HEAD_ACTIVE}>时间</div>
                    {['姓名', '电话', '身份证', '银行', '卡号', '推荐人', '备注'].map((h) => (
                      <div key={h} className={HEAD}>
                        {h}
                      </div>
                    ))}
                  </div>
                  {ROWS.map((r, i) => (
                    <div key={i} className={`grid ${COLS}`}>
                      <div
                        className={`flex items-center justify-center h-[30px] border-r border-b border-[#a5b5d0] text-[15px] ${
                          i === 0 ? 'bg-[#ffd665] text-[#3f78b8] border-[#d99a2b]' : 'bg-[#d8e6f4] text-[#3f78b8]'
                        }`}
                      >
                        {i + 1}
                      </div>
                      <Cell className={i === 0 ? 'bg-[#3b99fc] text-white' : ''}>{r[0]}</Cell>
                      <Cell>{r[1]}</Cell>
                      <Cell>{r[2]}</Cell>
                      <Cell>{r[3]}</Cell>
                      <Cell>{r[4]}</Cell>
                      <Cell>{r[5]}</Cell>
                      <Cell>Id1388</Cell>
                      <Cell>{r[6]}</Cell>
                    </div>
                  ))}
                </div>
                <div className="w-[100px] shrink-0 border-l border-[#6f6f6f] bg-[#a9a9a9]" />
                <div className="flex flex-col items-center w-[17px] ml-px shrink-0 bg-[#efefef]">
                  <span className="h-[18px] text-[7px] leading-[18px] text-[#444]">▲</span>
                  <div className="flex items-center justify-center w-[15px] h-[509px] rounded-[2px] border border-[#b4b4b4] bg-[linear-gradient(90deg,#f2f2f2,#cfcfcf)]">
                    <div className="w-[7px] h-[7px] border-y-2 border-double border-[#777]" />
                  </div>
                  <span className="mt-[40px] text-[7px] text-[#444]">▼</span>
                </div>
                <div className="w-[5px] shrink-0" />
                <div className="flex-1 min-w-0 mb-px bg-[#a9a9a9]">
                  <div className="h-[4px] bg-[#f0f0f0]" />
                  {PROPS.map(([k, v], i) => (
                    <div key={k} className="flex h-[25px] border-b border-[#e0e0e0] bg-white text-[14px] text-black">
                      <div className={`flex items-center w-[61px] shrink-0 pl-[3px] border-r border-[#888] border-b ${i === 0 ? 'bg-[#3b99fc] text-white' : 'bg-[#f0f0f0]'}`}>{k}</div>
                      <div className="flex items-center pl-[4px] whitespace-nowrap">{v}</div>
                    </div>
                  ))}
                </div>
              </div>

              <div className="h-[7px] shrink-0 bg-[#f0f0f0]" />
              <div className="h-[131px] shrink-0 ml-[3px] border-t border-[#8c8c8c] bg-[#a9a9a9]">
                <div className="grid grid-cols-[32px_97px_98px_98px_124px_98px_129px_98px_98px] w-[872px] h-[22px] border-b-2 border-[#8c99ad]">
                  <div className={HEAD}>
                    <Lock />
                  </div>
                  <div className="flex items-center justify-center text-[12px] text-black bg-[linear-gradient(#ffd052,#ffe270)] border-r border-[#d99a2b]">时间</div>
                  {LOWER.map((h) => (
                    <div key={h} className="flex items-center justify-center border-r border-[#a5b5d0] text-[12px] text-black bg-[#d8e6f4]">
                      {h}
                    </div>
                  ))}
                </div>
              </div>
              <div className="h-[11px] shrink-0 bg-[#f0f0f0]" />
            </div>
          </div>
        </div>
      </div>

      {/* status bar */}
      <div className="flex h-[6px] shrink-0 border-t border-[#b6c6d9] bg-[#dfe8f4]">
        <div className="w-[1380px] shrink-0" />
        <div className="flex items-end w-[161px] pl-[17px] shrink-0 border-r border-[#b6c6d9] bg-white">
          <div className="w-[3px] h-[2px] bg-[#2f6fd8]" />
          <div className="w-[16px] h-[2px] ml-[56px] bg-[#2f6fd8]" />
          <div className="w-[6px] h-[2px] ml-[10px] bg-[#b8bcc2]" />
          <div className="w-[7px] h-[2px] ml-[14px] bg-[#2f6fd8]" />
          <div className="w-[4px] h-[2px] ml-[14px] bg-[#2f6fd8]" />
        </div>
        <div className="w-[277px] shrink-0 border-r border-[#b6c6d9]" />
      </div>

      {/* floating bits */}
      <svg viewBox="0 0 24 11" className="absolute left-[1357px] top-[1013px] w-[24px] h-[11px]">
        <path d="M2 3l18-3 3 2v9H0z" fill="#f26a35" />
        <path d="M6 11c1-3 5-5 12-5" fill="none" stroke="#fff" strokeWidth="1.500" />
      </svg>
      <div className="absolute left-[1565px] top-[932px] w-[66px] h-[66px]">
        <svg viewBox="0 0 66 66" className="absolute inset-0 w-full h-full">
          <circle cx="33" cy="33" r="32" fill="#f2f2f2" stroke="#c4c4c4" strokeWidth="2" />
          <circle cx="33" cy="33" r="29" fill="#f6f8f6" stroke="#2fd566" strokeWidth="1" />
          <path d="M33 1a32 32 0 0 1 19 6.300" fill="none" stroke="#48dc6f" strokeWidth="3" />
        </svg>
        <div className="absolute left-0 right-0 top-[14px] flex items-baseline justify-center text-[#444]">
          <span className="text-[23px] leading-[26px] font-light">10</span>
          <span className="text-[12px] leading-none">%</span>
        </div>
        <div className="absolute left-0 right-0 top-[43px] flex items-center justify-center gap-[4px] text-[9px] leading-[12px] text-[#333]">
          <svg viewBox="0 0 8 14" className="w-[8px] h-[14px]">
            <path d="M2 8V2.500a2 2 0 0 1 4 0V8a3 3 0 1 1-4 0z" fill="none" stroke="#22cc66" />
            <circle cx="4" cy="10.500" r="1.500" fill="#22cc66" />
          </svg>
          10°C
        </div>
      </div>
    </div>
  );
}
